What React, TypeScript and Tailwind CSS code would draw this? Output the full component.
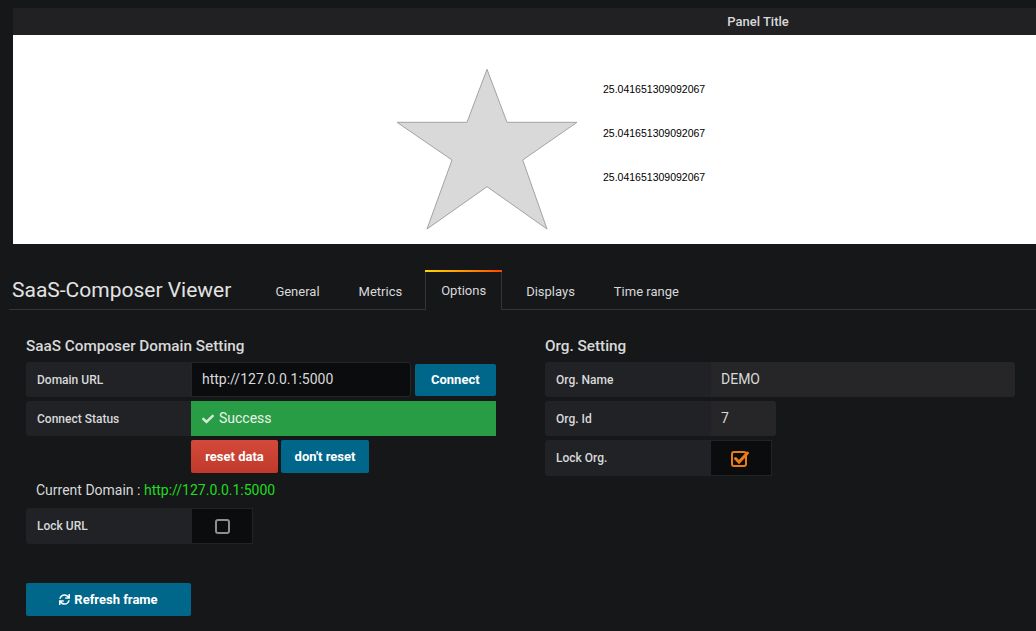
import { FaCheck, FaSync } from "react-icons/fa";

const tabs = ["General", "Metrics", "Options", "Displays", "Time range"];
const values = ["25.041651309092067", "25.041651309092067", "25.041651309092067"];

function Label({ text, w = "w-[165px]" }: { text: string; w?: string }) {
  return (
    <div className={`${w} flex h-full shrink-0 items-center rounded-l-[3px] bg-[#212226] pl-[11px] text-[12px] font-medium text-[#d8d9da]`}>
      {text}
    </div>
  );
}

export default function App() {
  return (
    <div className="min-h-[631px] w-[1036px] overflow-hidden bg-[#161719] font-['Roboto',sans-serif] text-[#d8d9da]">
      {/* panel preview */}
      <div className="ml-[13px] w-[1490px] pt-[8px]">
        <div className="flex h-[27px] items-center justify-center bg-[#212124] text-[13px] font-medium text-[#d8d9da]">
          Panel Title
        </div>
        <div className="flex h-[209px] items-start bg-white pl-[383px] pt-[33px]">
          <svg width="182" height="162" viewBox="-1 -1 182 162">
            <polygon
              points="90,0.3 110,53.3 180,53.3 125.7,91 150,160 90,117.7 30,160 55,91 0,53.3 70,53.3"
              fill="#d9d9d9"
              stroke="#a3a3a3"
              strokeWidth="1"
            />
          </svg>
          <div className="ml-[25px] -mt-[1px] flex flex-col font-['Liberation_Sans',Arial,sans-serif] text-[10.5px] leading-[44px] text-black">
            {values.map((v, i) => (
              <span key={i}>{v}</span>
            ))}
          </div>
        </div>
      </div>

      {/* editor header */}
      <div className="mt-[26px] ml-[9px] flex h-[40px] items-end border-b border-[#333438]">
        <div className="mr-[28px] flex h-full items-center pl-[3px] pt-[2px] text-[21px] text-[#e3e3e3]">
          SaaS-Composer Viewer
        </div>
        {tabs.map((t) =>
          t === "Options" ? (
            <div
              key={t}
              className="relative -mb-[1px] mr-[8px] flex h-[40px] items-center border-x border-[#333438] bg-[#161719] px-[15px] pt-[2px] text-[13px] text-[#d8d9da]"
            >
              <div className="absolute -left-[1px] -right-[1px] top-0 h-[2px] bg-gradient-to-r from-[#ffd500] to-[#ff4400]" />
              {t}
            </div>
          ) : (
            <div key={t} className="mr-[7px] flex h-[38px] items-center px-[16px] pt-[3px] text-[13px] text-[#d8d9da]">
              {t}
            </div>
          )
        )}
      </div>

      {/* settings */}
      <div className="flex pl-[26px] pt-[28px]">
        <div className="flex w-[470px] flex-col">
          <div className="h-[16px] text-[15.3px] font-medium leading-[16px] text-[#d8d9da]">
            SaaS Composer Domain Setting
          </div>
          <div className="mt-[8px] flex h-[35px] items-center">
            <Label text="Domain URL" />
            <div className="flex h-full w-[221px] items-center rounded-r-[3px] border border-[#262628] bg-[#0b0c0e] pl-[10px] text-[14px] text-[#d8d9da]">
              http://127.0.0.1:5000
            </div>
            <button className="ml-[4px] h-[32px] w-[82px] rounded-[2px] bg-[#00678b] pt-[1px] text-[13px] font-bold text-white">
              Connect
            </button>
          </div>
          <div className="mt-[4px] flex h-[35px] items-center">
            <Label text="Connect Status" />
            <div className="flex h-full w-[305px] items-center gap-[5px] bg-[#299c46] pl-[11px] text-[14px] text-[#e9f5ea]">
              <FaCheck className="h-[12px] w-[12px] text-[#d8e9dc]" />
              Success
            </div>
          </div>
          <div className="mt-[4px] flex h-[33px] gap-[3px] pl-[165px]">
            <button className="w-[87px] rounded-[2px] bg-gradient-to-b from-[#d44a3a] to-[#c0392b] text-[13px] font-bold text-white">
              reset data
            </button>
            <button className="w-[88px] rounded-[2px] bg-[#00678b] text-[13px] font-bold text-white">
              don't reset
            </button>
          </div>
          <div className="mt-[9px] pl-[10px] text-[14px] leading-[16px] text-[#d8d9da]">
            Current Domain : <span className="text-[#1fdc1f]">http://127.0.0.1:5000</span>
          </div>
          <div className="mt-[10px] flex h-[36px] items-center">
            <Label text="Lock URL" />
            <div className="flex h-full w-[62px] items-center justify-center border border-[#222326] bg-[#0b0c0e]">
              <div className="h-[15px] w-[15px] rounded-[3px] border-2 border-[#8e8e8e]" />
            </div>
          </div>
          <button className="mt-[39px] flex h-[33px] w-[165px] items-center justify-center gap-[4px] rounded-[2px] bg-[#00678b] text-[13px] font-bold text-white">
            <FaSync className="h-[11px] w-[11px]" />
            Refresh frame
          </button>
        </div>

        <div className="ml-[49px] flex flex-col">
          <div className="h-[16px] text-[15.3px] font-medium leading-[16px] text-[#d8d9da]">Org. Setting</div>
          <div className="mt-[8px] flex h-[35px] items-center">
            <Label text="Org. Name" w="w-[166px]" />
            <div className="flex h-full w-[304px] items-center rounded-r-[3px] bg-[#262628] pl-[10px] text-[14px] text-[#d8d9da]">
              DEMO
            </div>
          </div>
          <div className="mt-[4px] flex h-[35px] items-center">
            <Label text="Org. Id" w="w-[166px]" />
            <div className="flex h-full w-[65px] items-center rounded-r-[3px] bg-[#262628] pl-[10px] text-[14px] text-[#d8d9da]">
              7
            </div>
          </div>
          <div className="mt-[4px] flex h-[36px] items-center">
            <Label text="Lock Org." w="w-[165px]" />
            <div className="flex h-full w-[62px] items-center justify-center border border-[#222326] bg-[#0b0c0e]">
              <svg width="20" height="18" viewBox="0 0 20 18">
                <rect x="1" y="3" width="14" height="14" rx="2" fill="none" stroke="#eb7b18" strokeWidth="2" />
                <path d="M4.5 9.5 L8 13 L16.5 4" fill="none" stroke="#eb7b18" strokeWidth="3" strokeLinecap="round" />
              </svg>
            </div>
          </div>
        </div>
      </div>
    </div>
  );
}
